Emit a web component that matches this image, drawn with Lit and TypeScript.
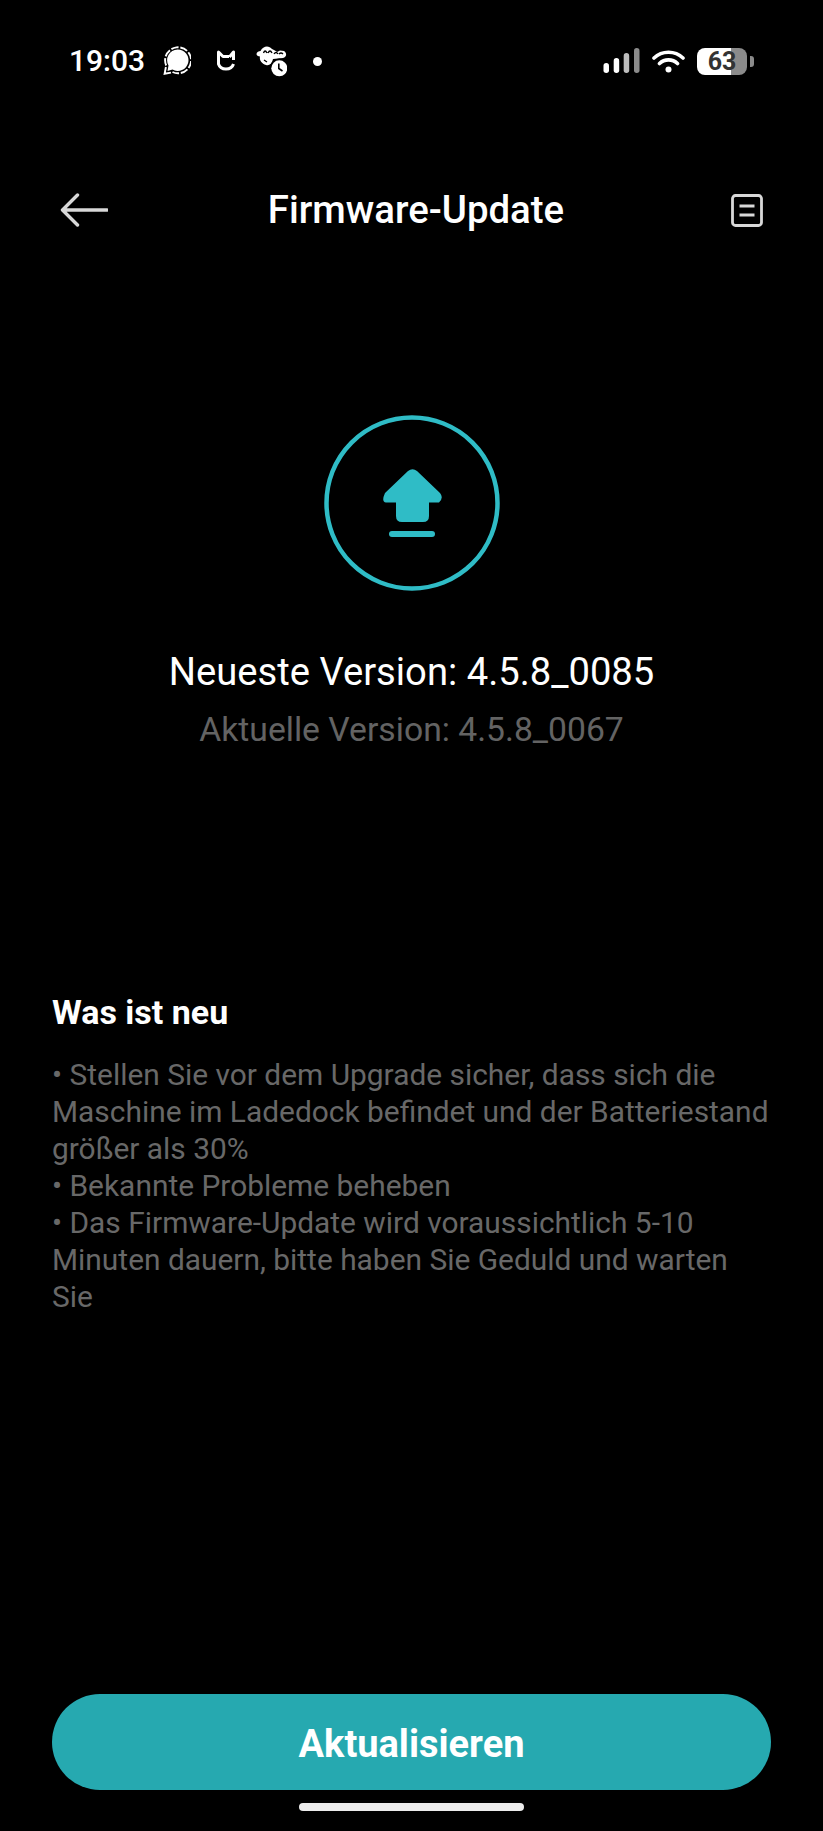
import { LitElement, html, css } from "lit";
import { customElement } from "lit/decorators.js";

@customElement("app-root")
export class AppRoot extends LitElement {
  static styles = css`
    :host {
      display: flex;
      flex-direction: column;
      width: 823px;
      height: 1831px;
      background: #000;
      color: #fff;
      font-family: Roboto, "Liberation Sans", sans-serif;
      overflow: hidden;
    }
    svg { display: block; flex: none; }
    .status {
      display: flex;
      align-items: center;
      height: 32px;
      margin-top: 45px;
      padding: 0 70px 0 69px;
    }
    .time { font-size: 30px; font-weight: 500; width: 94px; line-height: 32px; }
    .ic-signal { margin-right: 25px; }
    .ic-mi { margin-right: 20px; }
    .ic-pet { margin-right: 26px; }
    .dot { width: 9px; height: 9px; border-radius: 50%; background: #fff; }
    .status-right { margin-left: auto; display: flex; align-items: center; gap: 12px; margin-right: -1px; }
    .battery { display: flex; align-items: center; gap: 3px; }
    .batt-body {
      width: 50px;
      height: 27px;
      border-radius: 8px;
      background: linear-gradient(90deg, #fff 68%, #8b8b8b 68%);
      color: #333;
      font-size: 25px;
      font-weight: 700;
      line-height: 27px;
      text-align: center;
    }
    .batt-nub { width: 4px; height: 11px; border-radius: 0 3px 3px 0; background: #8b8b8b; }
    .nav {
      display: flex;
      align-items: center;
      justify-content: space-between;
      height: 42px;
      margin-top: 112px;
      padding: 0 60px;
    }
    .title {
      font-size: 38.4px;
      font-weight: 500;
      line-height: 42px;
      flex: 1;
      text-align: center;
      margin-right: 7px;
    }
    .hero {
      display: flex;
      flex-direction: column;
      align-items: center;
      margin-top: 184px;
    }
    .latest { font-size: 38.2px; line-height: 44px; margin-top: 59px; }
    .current { font-size: 33.7px; line-height: 40px; margin-top: 16px; color: #636363; }
    .notes { padding: 0 52px; margin-top: 242px; }
    .notes h2 { margin: 0; font-size: 34px; font-weight: 700; line-height: 40px; }
    .notes p { margin: 24px 0 0; font-size: 29.9px; line-height: 37px; color: #686868; }
    .spacer { flex: 1; }
    .cta {
      display: flex;
      align-items: center;
      justify-content: center;
      margin: 0 52px;
      padding-top: 3px;
      box-sizing: border-box;
      height: 96px;
      border-radius: 48px;
      background: #26a9b0;
      font-size: 38px;
      font-weight: 700;
    }
    .home { width: 225px; height: 8px; border-radius: 4px; background: #ececec; margin: 13px auto 20px; }
  `;

  render() {
    return html`
      <div class="status">
        <div class="time">19:03</div>
        <svg class="ic-signal" width="28" height="30" viewBox="0 0 28 30">
          <path d="M14.500 3.500 A10.700 10.700 0 1 1 9.500 23.500 L4.500 25 L5.500 19.500 A10.700 10.700 0 0 1 14.500 3.500 Z" fill="#fff"/>
          <path d="M3.200 19.500 A13 13 0 1 1 9.500 26" fill="none" stroke="#fff" stroke-width="1.900" stroke-dasharray="7.500 1.800"/>
          <path d="M2.900 21 L1.600 27.800 L8 26.600" fill="none" stroke="#fff" stroke-width="1.900"/>
        </svg>
        <svg class="ic-mi" width="20" height="22" viewBox="0 0 20 22">
          <path d="M13.500 7 L17.500 2 V10 M17.500 14 A7.800 7 0 0 1 2.500 14 V2 L7 6.500 H13" fill="none" stroke="#fff" stroke-width="3" stroke-linejoin="round"/>
        </svg>
        <svg class="ic-pet" width="31" height="32" viewBox="-1 0 31 32">
          <path d="M-0.500 9 C-0.500 7 2 6 3.500 6 C6 0.500 12 0 15 4 C17 5 19 6 20 7 L23 5.500 L27 6 C30 8 30 12 26 13 L16 14 C15 19 12 21 9 20 C5 19 2 15 3 11.500 C1 11.500 -0.500 10.500 -0.500 9 Z" fill="#fff"/>
          <path d="M6.500 8 Q8 4 10 8 M11 8 Q13 4 15 8 M17 9 Q19 6 21 9 M22 9 Q24 7 26 9 M7 15 L10 17" fill="none" stroke="#000" stroke-width="1.300"/>
          <circle cx="22.300" cy="23.300" r="9.700" fill="#000"/>
          <circle cx="22.300" cy="23.300" r="8" fill="#fff"/>
          <path d="M21.800 18.500 V23.500 L25.500 26" fill="none" stroke="#000" stroke-width="1.600"/>
        </svg>
        <div class="dot"></div>
        <div class="status-right">
          <svg width="37" height="26" viewBox="0 0 37 26">
            <rect x="0.500" y="15" width="5.500" height="10" rx="2.700" fill="#fff"/>
            <rect x="10.700" y="10" width="5.500" height="15" rx="2.700" fill="#fff"/>
            <rect x="20.700" y="5" width="5.500" height="20" rx="2.700" fill="#bdbdbd"/>
            <rect x="31" y="0" width="5.500" height="25" rx="2.700" fill="#8b8b8b"/>
          </svg>
          <svg width="33" height="24" viewBox="0 0 33 24">
            <path d="M2 9 A21 21 0 0 1 31 9 M7.500 14.500 A13 13 0 0 1 25.500 14.500" fill="none" stroke="#fff" stroke-width="3.600" stroke-linecap="round"/>
            <circle cx="16.500" cy="20.500" r="3" fill="#fff"/>
          </svg>
          <div class="battery">
            <div class="batt-body">63</div>
            <div class="batt-nub"></div>
          </div>
        </div>
      </div>

      <div class="nav">
        <svg width="48" height="34" viewBox="0 0 48 34">
          <path d="M47 17 H3 M17.500 2 L2.500 17 L17.500 32" fill="none" stroke="#d8d8d8" stroke-width="3.400" stroke-linecap="round" stroke-linejoin="round"/>
        </svg>
        <div class="title">Firmware-Update</div>
        <svg width="32" height="33" viewBox="0 0 32 33">
          <rect x="1.500" y="1.500" width="29" height="30" rx="3" fill="none" stroke="#d8d8d8" stroke-width="2.800"/>
          <path d="M8.500 12 H23.500 M8.500 21 H23.500" stroke="#d8d8d8" stroke-width="2.800"/>
        </svg>
      </div>

      <div class="hero">
        <svg width="176" height="176" viewBox="0 0 176 176">
          <circle cx="88" cy="88" r="85.500" fill="none" stroke="#2fbcc6" stroke-width="4.500"/>
          <path d="M84 56 Q88.500 52.500 93 56 L116 78 Q120 83 115 87.500 H105 V101 Q105 107 99 107 H78 Q72 107 72 101 V87.500 H62 Q57 87 61 78 Z" fill="#2fbcc6"/>
          <rect x="65" y="116" width="46" height="6" rx="3" fill="#2fbcc6"/>
        </svg>
        <div class="latest">Neueste Version: 4.5.8_0085</div>
        <div class="current">Aktuelle Version: 4.5.8_0067</div>
      </div>

      <div class="notes">
        <h2>Was ist neu</h2>
        <p>• Stellen Sie vor dem Upgrade sicher, dass sich die<br/>Maschine im Ladedock befindet und der Batteriestand<br/>größer als 30%<br/>• Bekannte Probleme beheben<br/>• Das Firmware-Update wird voraussichtlich 5-10<br/>Minuten dauern, bitte haben Sie Geduld und warten<br/>Sie</p>
      </div>

      <div class="spacer"></div>
      <div class="cta">Aktualisieren</div>
      <div class="home"></div>
    `;
  }
}
